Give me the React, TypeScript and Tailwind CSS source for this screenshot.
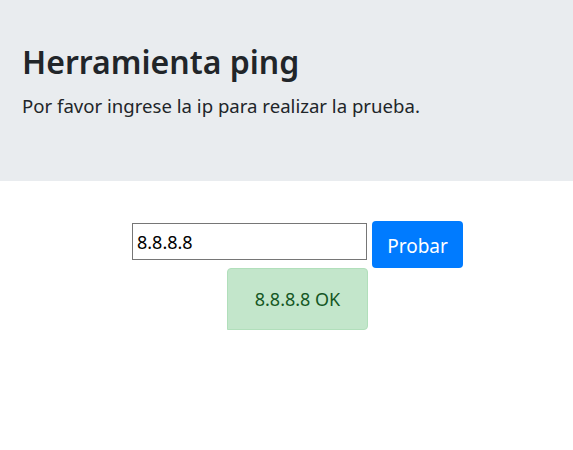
export default function App() {
  return (
    <div className="min-h-[450px] bg-white font-['Noto_Sans',sans-serif] text-[#212529]">
      <div className="h-[181px] bg-[#e9ecef] px-[22px] pt-[38px]">
        <h1 className="text-[32px] font-semibold leading-[48px]">Herramienta ping</h1>
        <p className="mt-[6px] text-[18.6px] leading-[28px]">
          Por favor ingrese la ip para realizar la prueba.
        </p>
      </div>

      <div className="flex flex-col items-center pl-[22px] pt-[40px]">
        <div className="flex items-start gap-[5px]">
          <input
            type="text"
            defaultValue="8.8.8.8"
            className="mt-[2px] h-[37px] w-[235px] border border-[#767676] px-[4px] text-[18px] text-black outline-none"
          />
          <button className="h-[47px] w-[91px] rounded-[4px] bg-[#007bff] pt-[3px] text-[19px] text-white">
            Probar
          </button>
        </div>
        <div className="flex h-[62px] w-[141px] items-center justify-center rounded-t-[4px] rounded-br-[4px] border border-[#b1dfbb] bg-[#c3e6cb] text-[18px] text-[#155724]">
          8.8.8.8 OK
        </div>
      </div>
    </div>
  )
}
